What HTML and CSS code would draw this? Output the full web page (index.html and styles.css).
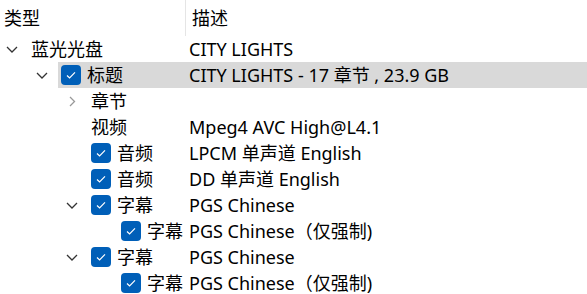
FILE: index.html
```html
<!DOCTYPE html>
<html lang="zh-CN">
<head>
    <meta charset="UTF-8">
    <title>蓝光光盘</title>
    <link rel="stylesheet" href="styles.css">
</head>
<body>
    <div class="tree">
        <div class="header">
            <div class="col-type">类型</div>
            <div class="col-desc">描述</div>
        </div>

        <div class="row lvl-0">
            <span class="expander down"><svg width="12" height="7" viewBox="0 0 12 7"><path d="M1 1l5 5 5-5" /></svg></span>
            <div class="body">
                <div class="name">蓝光光盘</div>
                <div class="desc">CITY LIGHTS</div>
            </div>
        </div>

        <div class="row lvl-1 selected">
            <span class="expander down"><svg width="12" height="7" viewBox="0 0 12 7"><path d="M1 1l5 5 5-5" /></svg></span>
            <div class="body">
                <div class="name"><span class="check"><svg width="20" height="20" viewBox="0 0 20 20"><path d="M6 10.5l2.6 2.5 5.4-5.6" /></svg></span>标题</div>
                <div class="desc">CITY LIGHTS - 17 章节 , 23.9 GB</div>
            </div>
        </div>

        <div class="row lvl-2">
            <span class="expander right"><svg width="7" height="11" viewBox="0 0 7 11"><path d="M1 1l4.5 4.5-4.5 4.5" /></svg></span>
            <div class="body">
                <div class="name">章节</div>
                <div class="desc"></div>
            </div>
        </div>

        <div class="row lvl-2">
            <span class="expander"></span>
            <div class="body">
                <div class="name">视频</div>
                <div class="desc">Mpeg4 AVC High@L4.1</div>
            </div>
        </div>

        <div class="row lvl-2">
            <span class="expander"></span>
            <div class="body">
                <div class="name"><span class="check"><svg width="20" height="20" viewBox="0 0 20 20"><path d="M6 10.5l2.6 2.5 5.4-5.6" /></svg></span>音频</div>
                <div class="desc">LPCM 单声道 English</div>
            </div>
        </div>

        <div class="row lvl-2">
            <span class="expander"></span>
            <div class="body">
                <div class="name"><span class="check"><svg width="20" height="20" viewBox="0 0 20 20"><path d="M6 10.5l2.6 2.5 5.4-5.6" /></svg></span>音频</div>
                <div class="desc">DD 单声道 English</div>
            </div>
        </div>

        <div class="row lvl-2">
            <span class="expander down"><svg width="12" height="7" viewBox="0 0 12 7"><path d="M1 1l5 5 5-5" /></svg></span>
            <div class="body">
                <div class="name"><span class="check"><svg width="20" height="20" viewBox="0 0 20 20"><path d="M6 10.5l2.6 2.5 5.4-5.6" /></svg></span>字幕</div>
                <div class="desc">PGS Chinese</div>
            </div>
        </div>

        <div class="row lvl-3">
            <span class="expander"></span>
            <div class="body">
                <div class="name"><span class="check"><svg width="20" height="20" viewBox="0 0 20 20"><path d="M6 10.5l2.6 2.5 5.4-5.6" /></svg></span>字幕</div>
                <div class="desc">PGS Chinese（仅强制)</div>
            </div>
        </div>

        <div class="row lvl-2">
            <span class="expander down"><svg width="12" height="7" viewBox="0 0 12 7"><path d="M1 1l5 5 5-5" /></svg></span>
            <div class="body">
                <div class="name"><span class="check"><svg width="20" height="20" viewBox="0 0 20 20"><path d="M6 10.5l2.6 2.5 5.4-5.6" /></svg></span>字幕</div>
                <div class="desc">PGS Chinese</div>
            </div>
        </div>

        <div class="row lvl-3">
            <span class="expander"></span>
            <div class="body">
                <div class="name"><span class="check"><svg width="20" height="20" viewBox="0 0 20 20"><path d="M6 10.5l2.6 2.5 5.4-5.6" /></svg></span>字幕</div>
                <div class="desc">PGS Chinese（仅强制)</div>
            </div>
        </div>
    </div>
</body>
</html>
```

FILE: styles.css
```css
body {
    margin: 0;
    background: white;
    color: #000;
    font-family: "Noto Sans", "Noto Sans CJK SC", sans-serif;
    font-size: 18px;
    overflow: hidden;
}
.tree {
    width: 587px;
}
.header {
    display: flex;
    height: 36px;
}
.header .col-type {
    width: 181px;
    padding-left: 4px;
    line-height: 36px;
}
.header .col-desc {
    flex: 1;
    border-left: 1px solid #e5e5e5;
    padding-left: 6px;
    line-height: 36px;
}
.row {
    display: flex;
    height: 26px;
    align-items: center;
}
.lvl-1 { padding-left: 30px; }
.lvl-2 { padding-left: 60px; }
.lvl-3 { padding-left: 90px; }
.expander {
    width: 24px;
    height: 26px;
    margin-right: 4px;
    display: flex;
    align-items: center;
    justify-content: center;
    flex-shrink: 0;
}
.expander svg {
    fill: none;
    stroke-width: 1.3;
}
.expander.down svg { stroke: #333; }
.expander.right svg { stroke: #999; }
.body {
    flex: 1;
    display: flex;
    height: 26px;
    align-items: center;
}
.selected .body {
    background: #d9d9d9;
}
.name {
    display: flex;
    align-items: center;
    padding-left: 3px;
    white-space: nowrap;
    line-height: 26px;
}
.lvl-0 .name { width: 158px; }
.lvl-1 .name { width: 128px; }
.lvl-2 .name { width: 98px; }
.lvl-3 .name { width: 68px; }
.check {
    width: 20px;
    height: 20px;
    margin-right: 6px;
    border-radius: 4px;
    background: #005fb8;
    flex-shrink: 0;
}
.check svg {
    display: block;
    fill: none;
    stroke: white;
    stroke-width: 1.2;
}
.desc {
    white-space: nowrap;
    line-height: 26px;
}
```
